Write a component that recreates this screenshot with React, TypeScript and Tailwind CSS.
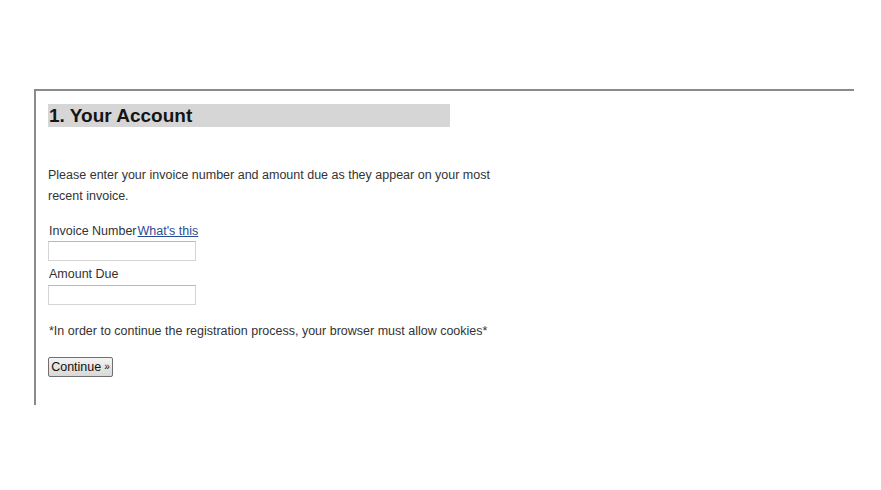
import React from "react";

export default function App() {
  return (
    <div
      className="w-[881px] h-[490px] bg-white overflow-hidden"
      style={{ fontFamily: '"Liberation Sans", Arial, sans-serif' }}
    >
      <div className="ml-[34px] mt-[89px] w-[820px] h-[316px] border-t-2 border-l-2 border-[#8a8a8a] pl-[12px] pt-[13px] text-[12.5px] text-[#333333]">
        <div className="w-[402px] h-[23px] bg-[#d6d6d6] flex items-center pl-[1px]">
          <h1 className="text-[19px] font-bold text-[#151515] leading-none">1. Your Account</h1>
        </div>
        <p className="mt-[38px] w-[450px] leading-[21px]">
          Please enter your invoice number and amount due as they appear on your most recent invoice.
        </p>
        <div className="mt-[16px] leading-[16px] pl-[1px]">
          Invoice Number
          <a href="#" className="text-[#2b4c93] underline ml-[1px]">What's this</a>
        </div>
        <input
          type="text"
          className="block mt-[2px] w-[148px] h-[20px] border border-[#d4d4d4] border-t-[#b8b8b8] bg-white"
        />
        <div className="mt-[5px] leading-[16px] pl-[1px]">Amount Due</div>
        <input
          type="text"
          className="block mt-[3px] w-[148px] h-[20px] border border-[#d4d4d4] border-t-[#b8b8b8] bg-white"
        />
        <p className="mt-[18px] leading-[16px] pl-[1px]">
          *In order to continue the registration process, your browser must allow cookies*
        </p>
        <button className="mt-[18px] w-[65px] h-[20px] border border-[#707070] rounded-[2px] bg-gradient-to-b from-[#f4f4f4] to-[#d8d8d8] text-[12.5px] text-[#111] leading-none flex items-center justify-center">
          Continue <span className="text-[10px] ml-[3px]">»</span>
        </button>
      </div>
    </div>
  );
}
